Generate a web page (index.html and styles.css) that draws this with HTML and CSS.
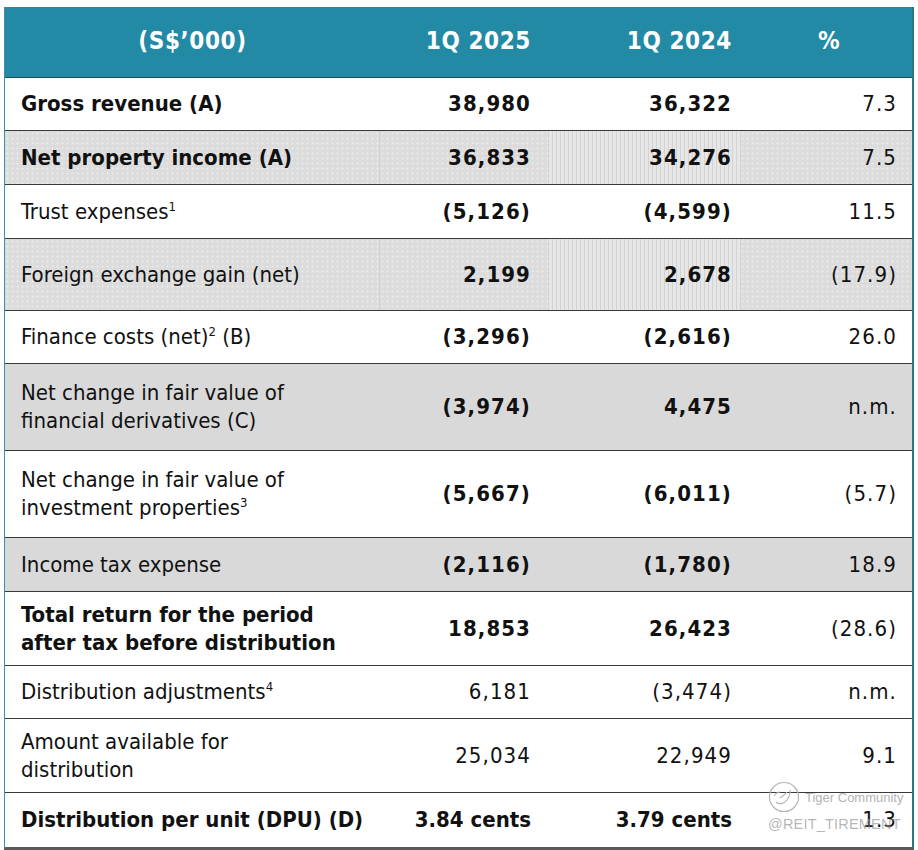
FILE: index.html
```html
<!DOCTYPE html>
<html>
<head>
<meta charset="utf-8">
<link rel="stylesheet" href="styles.css">
</head>
<body>
<div class="sheet">
  <div class="tbl">
    <div class="row head">
      <div class="c c1 hc">(S$’000)</div>
      <div class="c c2">1Q 2025</div>
      <div class="c c3">1Q 2024</div>
      <div class="c c4 hc">%</div>
    </div>
    <div class="row r53">
      <div class="c c1 b"><span>Gross revenue (A)</span></div>
      <div class="c c2">38,980</div>
      <div class="c c3">36,322</div>
      <div class="c c4">7.3</div>
    </div>
    <div class="row r54 dots">
      <div class="c c1 b"><span>Net property income (A)</span></div>
      <div class="c c2">36,833</div>
      <div class="c c3 lines">34,276</div>
      <div class="c c4">7.5</div>
    </div>
    <div class="row r54">
      <div class="c c1"><span>Trust expenses<sup class="fn">1</sup></span></div>
      <div class="c c2">(5,126)</div>
      <div class="c c3">(4,599)</div>
      <div class="c c4">11.5</div>
    </div>
    <div class="row r72 dots">
      <div class="c c1"><span>Foreign exchange gain (net)</span></div>
      <div class="c c2">2,199</div>
      <div class="c c3 lines">2,678</div>
      <div class="c c4">(17.9)</div>
    </div>
    <div class="row r53">
      <div class="c c1"><span>Finance costs (net)<sup class="fn">2</sup> (B)</span></div>
      <div class="c c2">(3,296)</div>
      <div class="c c3">(2,616)</div>
      <div class="c c4">26.0</div>
    </div>
    <div class="row r87 grey">
      <div class="c c1"><span>Net change in fair value of<br>financial derivatives (C)</span></div>
      <div class="c c2">(3,974)</div>
      <div class="c c3">4,475</div>
      <div class="c c4">n.m.</div>
    </div>
    <div class="row r87">
      <div class="c c1"><span>Net change in fair value of<br>investment properties<sup class="fn">3</sup></span></div>
      <div class="c c2">(5,667)</div>
      <div class="c c3">(6,011)</div>
      <div class="c c4">(5.7)</div>
    </div>
    <div class="row r54 grey">
      <div class="c c1"><span>Income tax expense</span></div>
      <div class="c c2">(2,116)</div>
      <div class="c c3">(1,780)</div>
      <div class="c c4">18.9</div>
    </div>
    <div class="row r74">
      <div class="c c1 b"><span>Total return for the period<br>after tax before distribution</span></div>
      <div class="c c2">18,853</div>
      <div class="c c3">26,423</div>
      <div class="c c4">(28.6)</div>
    </div>
    <div class="row r53">
      <div class="c c1"><span>Distribution adjustments<sup class="fn">4</sup></span></div>
      <div class="c c2 n">6,181</div>
      <div class="c c3 n">(3,474)</div>
      <div class="c c4">n.m.</div>
    </div>
    <div class="row r74">
      <div class="c c1"><span>Amount available for<br>distribution</span></div>
      <div class="c c2 n">25,034</div>
      <div class="c c3 n">22,949</div>
      <div class="c c4">9.1</div>
    </div>
    <div class="row r54 last">
      <div class="c c1 b"><span>Distribution per unit (DPU) (D)</span></div>
      <div class="c c2 cents">3.84 cents</div>
      <div class="c c3 cents">3.79 cents</div>
      <div class="c c4">1.3</div>
    </div>
  </div>
  <div class="wm">
    <div class="wm-top">
      <svg class="wm-logo" width="32" height="32" viewBox="0 0 32 32">
        <circle cx="16" cy="16" r="14.5" fill="none" stroke="#b4b4b4" stroke-width="1.2"/>
        <path d="M8 21 C 11 24, 16 23, 19 19 C 21 16, 23 13, 22 9" fill="none" stroke="#b4b4b4" stroke-width="1.2"/>
        <path d="M12 17 C 14 15, 17 14, 19 11" fill="none" stroke="#b4b4b4" stroke-width="1.2"/>
        <path d="M6 15 C 8 12, 10 11, 12 11" fill="none" stroke="#b4b4b4" stroke-width="1.2"/>
      </svg>
      <span class="wm-name">Tiger Community</span>
    </div>
    <div class="wm-handle">@REIT_TIREMENT</div>
  </div>
</div>
</body>
</html>
```
FILE: styles.css
```css
html, body {
  margin: 0;
  padding: 0;
  background: #ffffff;
}
.sheet {
  position: relative;
  width: 918px;
  height: 850px;
  padding: 7px 4px 0 4px;
  box-sizing: border-box;
  font-family: "DejaVu Sans Condensed", "DejaVu Sans", sans-serif;
  color: #111111;
}
.tbl {
  width: 910px;
  border-left: 1px solid #3d8fa6;
  border-right: 2px solid #2d7488;
  border-bottom: 3px solid #5a5a5a;
  box-sizing: border-box;
}
.row {
  display: grid;
  grid-template-columns: 375px 168px 193px 172px;
  box-sizing: border-box;
  border-bottom: 1px solid #3a3a3a;
}
.row.last { border-bottom: none; }
.head {
  height: 71px;
  background: #228aa5;
  color: #ffffff;
  font-weight: bold;
  border-bottom: 1px solid #1c4f5e;
}
.r53 { height: 53px; }
.r54 { height: 54px; }
.r72 { height: 72px; }
.r74 { height: 74px; }
.r87 { height: 87px; }
.c {
  display: flex;
  align-items: center;
  font-size: 22px;
  line-height: 28px;
}
.head .c {
  font-size: 24px;
  letter-spacing: 0.6px;
  padding-bottom: 2px;
}
.c1 {
  padding-left: 16px;
}
.c2, .c3, .c4 {
  justify-content: flex-end;
  letter-spacing: 1.1px;
}
.c2 {
  padding-right: 17px;
  font-weight: bold;
}
.c3 {
  padding-right: 9px;
  font-weight: bold;
}
.c4 {
  padding-right: 16px;
}
.c2.cents, .c3.cents { letter-spacing: 0; }
.head .c1, .head .c4 {
  justify-content: center;
  padding-left: 0;
  padding-right: 0;
}
.head .c4 { padding-left: 4px; }
.b { font-weight: bold; }
.c2.n, .c3.n { font-weight: normal; }
.fn {
  font-size: 13px;
  line-height: 0;
  vertical-align: 8px;
  margin-left: 0;
}
.grey { background: #d9d9d9; }
.dots {
  background-color: #dcdcdc;
  background-image: radial-gradient(circle, #eeeeee 0.8px, transparent 1.1px);
  background-size: 5px 5px;
}
.dots .c1 { border-right: 1px solid #d0d0d0; }
.lines {
  background-color: #dcdcdc;
  background-image: repeating-linear-gradient(90deg, #d3d3d3 0, #d3d3d3 1px, #e6e6e6 1px, #e6e6e6 4px);
}
.wm {
  position: absolute;
  left: 768px;
  top: 781px;
  width: 140px;
  pointer-events: none;
}
.wm-top {
  display: flex;
  align-items: center;
  gap: 5px;
}
.wm-logo { display: block; }
.wm-name {
  font-family: "Liberation Sans", Arial, sans-serif;
  font-size: 13px;
  color: #b4b4b4;
}
.wm-handle {
  font-family: "Liberation Sans", Arial, sans-serif;
  font-size: 14.5px;
  color: rgba(150, 150, 150, 0.7);
  margin-top: 3px;
  letter-spacing: 0.2px;
}
```
